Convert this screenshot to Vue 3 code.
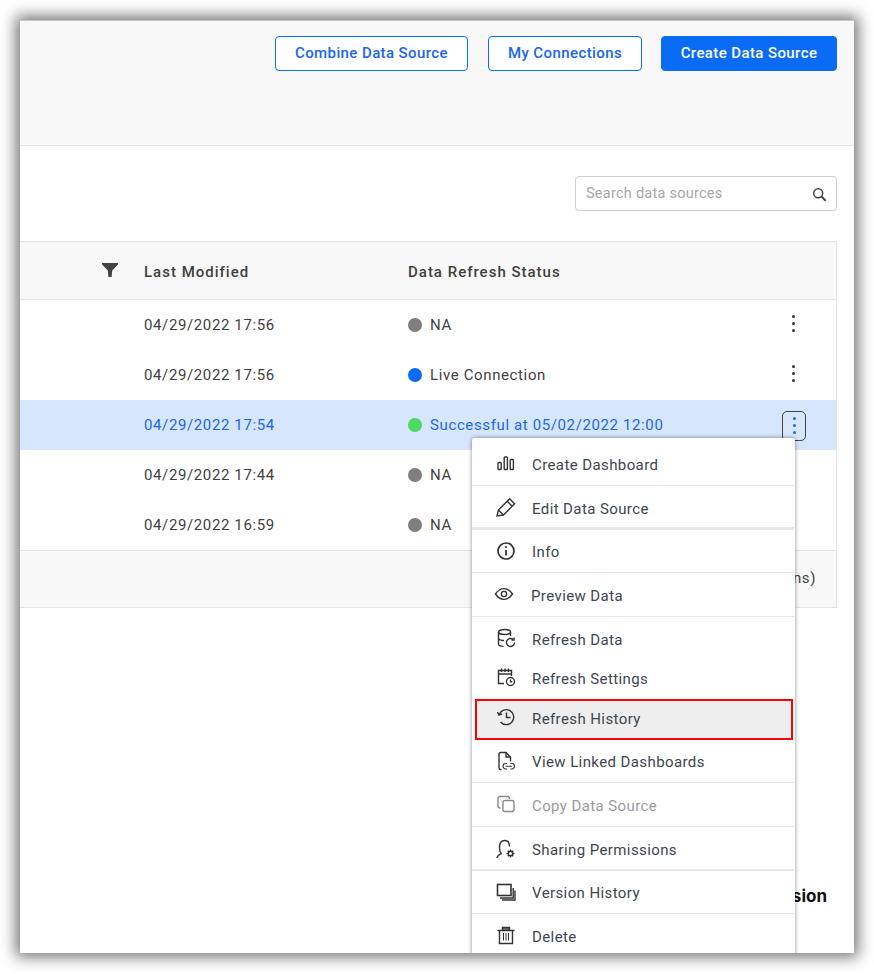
<script setup>
const rows = [
  { date: '04/29/2022 17:56', status: 'NA', tone: 'gray' },
  { date: '04/29/2022 17:56', status: 'Live Connection', tone: 'blue' },
  { date: '04/29/2022 17:54', status: 'Successful at 05/02/2022 12:00', tone: 'green', active: true },
  { date: '04/29/2022 17:44', status: 'NA', tone: 'gray' },
  { date: '04/29/2022 16:59', status: 'NA', tone: 'gray' },
];

const menu = [
  { label: 'Create Dashboard', icon: 'chart', cls: 'first' },
  { label: 'Edit Data Source', icon: 'pencil', cls: 'thick' },
  { label: 'Info', icon: 'info' },
  { label: 'Preview Data', icon: 'eye', cls: 'tall shift' },
  { label: 'Refresh Data', icon: 'dbrefresh', cls: 'flat' },
  { label: 'Refresh Settings', icon: 'calendar', cls: 'flat short' },
  { label: 'Refresh History', icon: 'history', cls: 'flat picked' },
  { label: 'View Linked Dashboards', icon: 'filelink' },
  { label: 'Copy Data Source', icon: 'copy', cls: 'tall disabled' },
  { label: 'Sharing Permissions', icon: 'share', cls: 'tall thick-sm' },
  { label: 'Version History', icon: 'versions' },
  { label: 'Delete', icon: 'trash', cls: 'flat' },
];
</script>

<template>
  <div class="frame">
    <header class="top">
      <button class="btn outline combine"><span>Combine Data Source</span></button>
      <button class="btn outline connections"><span>My Connections</span></button>
      <button class="btn solid"><span>Create Data Source</span></button>
    </header>

    <div class="toolbar">
      <div class="search">
        <span class="placeholder">Search data sources</span>
        <svg class="search-icon" viewBox="0 0 16 16" fill="none" stroke="#444" stroke-width="1.6">
          <circle cx="6.600" cy="6.600" r="4.800" />
          <path d="M10 10l4.600 4.600" stroke-width="2.200" />
        </svg>
      </div>
    </div>

    <section class="table">
      <div class="row head">
        <svg class="funnel" viewBox="0 0 16 14"><path d="M0 0h16v1.600L10.200 7.600 9.600 14H6.400L5.800 7.600 0 1.600z" fill="#444" /></svg>
        <span>Last Modified</span>
        <span>Data Refresh Status</span>
        <span></span>
      </div>
      <div v-for="(r, i) in rows" :key="i" class="row body" :class="{ active: r.active }">
        <span></span>
        <span>{{ r.date }}</span>
        <span class="status"><i class="dot" :class="r.tone"></i>{{ r.status }}</span>
        <span class="kebab"><b></b><b></b><b></b></span>
      </div>
      <div class="foot"><span>5 Data Connections)</span></div>
    </section>

    <div class="brand">Version</div>

    <nav class="menu">
      <div v-for="m in menu" :key="m.label" class="item" :class="m.cls">
        <svg class="ico" viewBox="0 0 20 20" fill="none" stroke="currentColor" stroke-width="1.400">
          <template v-if="m.icon === 'chart'">
            <rect x="2" y="8.500" width="3.200" height="7" rx=".8" /><rect x="8.200" y="3" width="3.200" height="12.500" rx=".8" /><rect x="14.200" y="5.500" width="3.200" height="10" rx=".8" />
          </template>
          <template v-else-if="m.icon === 'pencil'">
            <path d="M1 19l1.400-6L13.600 1.800l5 5L7.400 18z" /><path d="M2.400 13l5 5M11.200 4.200l5 5" />
          </template>
          <template v-else-if="m.icon === 'info'">
            <circle cx="10" cy="10" r="8" stroke-width="1.700" /><path d="M10 9v5.400" stroke-width="1.800" /><circle cx="10" cy="6" r="1.100" fill="currentColor" stroke="none" />
          </template>
          <template v-else-if="m.icon === 'eye'">
            <path d="M1.500 10C4 6.300 6.800 4.600 10 4.600s6 1.700 8.500 5.400c-2.500 3.700-5.300 5.400-8.500 5.400S4 13.700 1.500 10z" /><circle cx="10" cy="10" r="2.600" />
          </template>
          <template v-else-if="m.icon === 'dbrefresh'">
            <ellipse cx="8.500" cy="4" rx="6" ry="2.500" /><path d="M2.500 4v12c0 1.400 2 2.200 5 2.400M2.500 10c0 1.400 2.200 2.400 5.500 2.500M14.500 4v4" />
            <path d="M18.500 14.500a4 4 0 1 1-1.300-3" /><path d="M18 9.500v2.500h-2.500" />
          </template>
          <template v-else-if="m.icon === 'calendar'">
            <path d="M8 16.500H2.500V3.500h13V9" /><path d="M2.500 7h13M5.500 1.500v3.500M9 1.500v3.500M12.500 1.500v3.500" />
            <circle cx="14.500" cy="14.500" r="4" /><path d="M14.500 12.500v2.300h1.800" />
          </template>
          <template v-else-if="m.icon === 'history'">
            <path d="M3.200 7.500A7.500 7.500 0 1 1 4.500 15" /><path d="M1.500 5l1.600 3 3-1.200" /><path d="M10.500 5.500v5h4" />
          </template>
          <template v-else-if="m.icon === 'filelink'">
            <path d="M5.500 18.500H4.500a1.500 1.500 0 0 1-1.500-1.500V3a1.500 1.500 0 0 1 1.500-1.500H10l4.500 4.500v4.500" /><path d="M10 1.500V6h4.500" />
            <path d="M11 12.500H9.800a2.750 2.750 0 0 0 0 5.500H11M14.500 12.500h1.200a2.750 2.750 0 0 1 0 5.500h-1.200M9.500 15.250h6.500" stroke-width="1.200" />
          </template>
          <template v-else-if="m.icon === 'copy'">
            <rect x="7" y="6.500" width="11" height="11" rx="2" /><path d="M4.500 14H4a2 2 0 0 1-2-2V4.500a2 2 0 0 1 2-2h7.500a2 2 0 0 1 2 2V5" />
          </template>
          <template v-else-if="m.icon === 'share'">
            <path d="M1 19c.2-1.800 1.400-3 4.200-4.300C4 13.200 3.500 11.500 3.500 8.500c0-4 1.800-7 5-7s5 2.500 5 6" />
            <circle cx="14.500" cy="14.500" r="2.200" /><path d="M14.500 10.500v2M14.500 16.500v2M10.500 14.500h2M16.500 14.500h2M11.700 11.700l1.400 1.400M15.900 15.900l1.400 1.400M11.700 17.300l1.400-1.400M15.900 13.100l1.400-1.400" />
          </template>
          <template v-else-if="m.icon === 'versions'">
            <rect x="1.500" y="2.500" width="13.500" height="11" stroke-width="1.600" /><path d="M4 16h13.200V6M6 18h13V8.500" />
          </template>
          <template v-else>
            <path d="M1.500 5.500h17" stroke-width="1.500" /><path d="M6.500 5V2.500h7V5" fill="#666" /><path d="M3.500 5.500v13h13v-13" /><path d="M7.500 8v7.500M10 8v7.500M12.500 8v7.500" stroke-width="1" />
          </template>
        </svg>
        <span>{{ m.label }}</span>
      </div>
    </nav>
  </div>
</template>

<style>
html, body { margin: 0; background: #fff; }
body { min-height: 974px; }
</style>

<style scoped>
.frame {
  position: relative;
  box-sizing: border-box;
  width: 834px;
  height: 933px;
  margin: 20px 0 0 20px;
  overflow: hidden;
  background: #fff;
  border-top: 1px solid #c8c8c8;
  box-shadow: 0 0 14px 4px rgba(0, 0, 0, 0.55);
  font-family: Roboto, "Liberation Sans", sans-serif;
  font-size: 15px;
  letter-spacing: 0.62px;
  color: #3f3f3f;
}
.top {
  box-sizing: border-box;
  height: 125px;
  padding: 15px 17px 0 0;
  display: flex;
  justify-content: flex-end;
  align-items: flex-start;
  background: #f8f8f8;
  border-bottom: 1px solid #e4e4e4;
}
.btn {
  height: 35px;
  padding: 0 0 2px;
  border-radius: 4px;
  font: 500 15px Roboto, sans-serif;
  letter-spacing: 0.4px;
  border: 1px solid #0a6cf5;
}
.outline { background: #fff; color: #1a66f0; }
.solid { background: #0a6cf5; color: #fff; width: 176px; }
.combine { width: 193px; margin-right: 20px; }
.connections { width: 154px; margin-right: 19px; }
.toolbar {
  height: 95px;
  padding: 30px 17px 0 0;
  box-sizing: border-box;
  display: flex;
  justify-content: flex-end;
}
.search {
  box-sizing: border-box;
  width: 262px;
  height: 35px;
  padding: 0 9px 0 10px;
  display: flex;
  align-items: center;
  justify-content: space-between;
  background: #fff;
  border: 1px solid #cfcfcf;
  border-radius: 4px;
}
.placeholder { color: #a6a6a6; font-size: 14.5px; letter-spacing: 0.25px; margin-top: -1px; }
.search-icon { width: 15px; height: 15px; margin-top: 2px; }
.table {
  width: 817px;
  border-top: 1px solid #e4e4e4;
  border-right: 1px solid #e4e4e4;
  box-sizing: border-box;
}
.row {
  display: grid;
  grid-template-columns: 124px 264px 1fr 48px;
  align-items: center;
}
.head {
  box-sizing: border-box;
  height: 58px;
  padding-top: 2px;
  background: #f8f8f8;
  border-bottom: 1px solid #e4e4e4;
  font-weight: 500;
  letter-spacing: 1px;
}
.funnel { width: 16px; height: 14px; margin: -3px 0 0 82px; }
.body { height: 50px; }
.active { background: #d6e6fd; color: #1a66f0; }
.status { display: flex; align-items: center; gap: 8px; }
.dot { width: 14px; height: 14px; border-radius: 50%; }
.gray { background: #7f7f7f; }
.blue { background: #0a6cf5; }
.green { background: #4cd964; }
.kebab {
  justify-self: start;
  margin-left: -7px;
  margin-top: -4px;
  width: 24px;
  height: 24px;
  display: flex;
  flex-direction: column;
  align-items: center;
  justify-content: center;
  gap: 4px;
  box-sizing: border-box;
}
.kebab b { width: 3px; height: 3px; border-radius: 50%; background: #333; }
.active .kebab {
  height: 30px;
  margin-left: -6px;
  margin-top: 1px;
  border: 1px solid #444;
  border-radius: 5px;
}
.active .kebab b { background: #1a66f0; }
.foot {
  box-sizing: border-box;
  height: 58px;
  padding: 0 20px 2px 0;
  display: flex;
  align-items: center;
  justify-content: flex-end;
  background: #f8f8f8;
  border-top: 1px solid #e4e4e4;
  border-bottom: 1px solid #e4e4e4;
}
.brand {
  margin: 278px 27px 0 0;
  text-align: right;
  font: 700 17px Inter, sans-serif;
  letter-spacing: 0;
  color: #111;
}
.menu {
  position: absolute;
  left: 452px;
  top: 417px;
  width: 323px;
  background: #fff;
  border-radius: 2px 2px 0 0;
  box-shadow: 0 0 4px rgba(0, 0, 0, 0.45);
}
.item {
  box-sizing: border-box;
  height: 43px;
  padding-left: 24px;
  padding-top: 2px;
  display: flex;
  align-items: center;
  gap: 16px;
  border-bottom: 1px solid #e8e8e8;
  margin-right: 1px;
  font-size: 15px;
  letter-spacing: 0.4px;
  color: #3d4650;
}
.ico { width: 20px; height: 20px; margin-top: -3px; color: #333; flex: none; }
.first { height: 48px; padding-top: 7px; }
.thick { height: 44px; border-bottom-width: 3px; padding-top: 4px; }
.tall { height: 44px; }
.thick-sm { border-bottom-width: 2px; padding-top: 4px; }
.flat { border-bottom: 0; }
.short { height: 39px; padding-top: 0; padding-bottom: 2px; }
.picked {
  height: 41px;
  margin-left: 3px;
  margin-right: 2px;
  padding-left: 19px;
  padding-top: 0;
  padding-bottom: 2px;
  background: #eee;
  border: 2px solid #f00;
}
.shift span { margin-left: -1px; }
.shift .ico { margin-left: -2px; margin-right: 2px; }
.disabled { color: #9b9b9b; }
.disabled .ico { color: #8a8a8a; }
</style>
